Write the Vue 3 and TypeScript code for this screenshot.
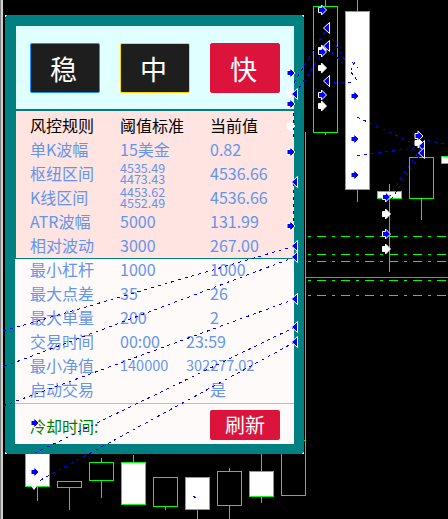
<script setup lang="ts">
interface Candle { x: number; y: number; w: number; h: number; fill: string; wick: [number, number] }
const candles: Candle[] = [
  { x: 313.5, y: 6.5, w: 24, h: 126, fill: '#000', wick: [0, 135] },
  { x: 345.5, y: 11.5, w: 24, h: 178, fill: '#fff', wick: [0, 202] },
  { x: 409.5, y: 157.5, w: 24, h: 41, fill: '#000', wick: [157, 220] },
  { x: 377.5, y: 191.5, w: 24, h: 7, fill: '#fff', wick: [184, 272] },
  { x: 441.5, y: 156.5, w: 24, h: 7, fill: '#fff', wick: [156, 164] },
  { x: 25.5, y: 440.5, w: 24, h: 46, fill: '#fff', wick: [440, 501] },
  { x: 57.5, y: 481.5, w: 24, h: 6, fill: '#000', wick: [481, 510] },
  { x: 89.5, y: 462.5, w: 24, h: 18, fill: '#000', wick: [458, 498] },
  { x: 121.5, y: 462.5, w: 24, h: 42, fill: '#fff', wick: [455, 462] },
  { x: 153.5, y: 477.5, w: 24, h: 29, fill: '#000', wick: [477, 510] },
  { x: 185.5, y: 477.5, w: 24, h: 32, fill: '#fff', wick: [477, 519] },
  { x: 217.5, y: 471.5, w: 24, h: 34, fill: '#000', wick: [468, 519] },
  { x: 249.5, y: 471.5, w: 24, h: 25, fill: '#fff', wick: [450, 503] },
  { x: 281.5, y: 440.5, w: 24, h: 55, fill: '#000', wick: [440, 440] },
]
const levels = [236.5, 254.5, 261.5, 280.5, 295.5]
const corners: [number, number][] = [[5, 15], [302, 15], [5, 452], [302, 452]]
const dotted: string[] = [
  'M 294 83 L 327 28',
  'M 329 33 L 346 62',
  'M 295 94 L 327 46',
  'M 327 47 L 346 67',
  'M 327 82 L 351 83',
  'M 352 62 L 358 68',
  'M 351 72 L 357 80',
  'M 355 62 L 351 70',
  'M 293.5 113 L 293.5 137',
  'M 293.5 183 L 293.5 226',
  'M 357 117 L 421 147',
  'M 357 156 L 421 147',
  'M 427 140 L 448 145',
  'M 421 148 L 389 197',
  'M 423 150 L 389 203',
  'M 295 246 L 0 332',
  'M 295 257 L 0 368',
  'M 295 299 L 0 407',
  'M 295 327 L 35 453',
  'M 295 342 L 37 482',
  'M 193 496 L 197 499',
]
const whiteRight: [number, number][] = [
  [322.5, 50], [322.5, 68], [322.5, 106], [291, 92], [291, 126], [386.5, 214], [386.5, 249], [419, 143],
]
const blueRight: [number, number][] = [
  [322.5, 10], [322.5, 52], [322.5, 95], [291, 73], [291, 104], [291, 152], [291, 226],
  [355, 96], [355, 139], [355, 175], [386.5, 197], [386.5, 234], [419, 136], [35, 472], [35, 423],
]
const blueLeft: [number, number][] = [
  [327, 28], [327, 46], [327, 81], [295, 94], [295, 182], [295, 246], [295, 257], [295, 299], [295, 327], [295, 342], [422, 146], [422, 153],
]

interface Row { name: string; limit: string | string[]; value: string; wide?: boolean; small?: boolean }
const riskRows: Row[] = [
  { name: '单K波幅', limit: '15美金', value: '0.82' },
  { name: '枢纽区间', limit: ['4535.49', '4473.43'], value: '4536.66' },
  { name: 'K线区间', limit: ['4453.62', '4552.49'], value: '4536.66' },
  { name: 'ATR波幅', limit: '5000', value: '131.99' },
  { name: '相对波动', limit: '3000', value: '267.00' },
]
const accountRows: Row[] = [
  { name: '最小杠杆', limit: '1000', value: '1000' },
  { name: '最大点差', limit: '35', value: '26' },
  { name: '最大单量', limit: '200', value: '2' },
  { name: '交易时间', limit: '00:00', value: '23:59', wide: true },
  { name: '最小净值', limit: '140000', value: '302277.02', wide: true, small: true },
  { name: '启动交易', limit: '', value: '是' },
]
</script>

<template>
  <div class="screen">
    <svg class="chart" width="448" height="519" viewBox="0 0 448 519">
      <rect x="0" y="0" width="1" height="519" fill="#808080" />
      <rect x="1" y="0" width="2" height="519" fill="#d0d0d0" />
      <line v-for="y in levels" :key="y" x1="308" x2="448" :y1="y" :y2="y" class="level" />
      <line x1="305" x2="448" y1="277.5" y2="277.5" class="grid" />
      <g v-for="c in candles" :key="c.x">
        <line :x1="c.x + 12" :x2="c.x + 12" :y1="c.wick[0]" :y2="c.wick[1]" class="wick" />
        <rect :x="c.x" :y="c.y" :width="c.w" :height="c.h" :fill="c.fill" class="body" />
      </g>
      <rect x="305" y="132" width="1" height="364" class="edge" />
      <rect v-for="p in corners" :key="p[0] + '-' + p[1]" :x="p[0]" :y="p[1]" width="2" height="2" fill="#fff" />
      <path d="M31 454H37L34 450Z M31 486H37L34 490Z" fill="#fff" />
    </svg>

    <section class="panel">
      <div class="modes">
        <button class="mode steady">稳</button>
        <button class="mode medium">中</button>
        <button class="mode fast">快</button>
      </div>
      <div class="table risk">
        <div class="row head">
          <span>风控规则</span><span>阈值标准</span><span>当前值</span>
        </div>
        <div v-for="r in riskRows" :key="r.name" class="row">
          <span>{{ r.name }}</span>
          <span v-if="Array.isArray(r.limit)" class="pair">
            <i>{{ r.limit[0] }}</i><i>{{ r.limit[1] }}</i>
          </span>
          <span v-else>{{ r.limit }}</span>
          <span>{{ r.value }}</span>
        </div>
      </div>
      <div class="table account">
        <div v-for="r in accountRows" :key="r.name" class="row" :class="{ small: r.small }">
          <span>{{ r.name }}</span>
          <span>{{ r.limit }}</span>
          <span :class="{ shifted: r.wide }">{{ r.value }}</span>
        </div>
      </div>
      <div class="footer">
        <span class="cooldown">冷却时间:</span>
        <button class="refresh">刷新</button>
      </div>
    </section>

    <svg class="overlay" width="448" height="519" viewBox="0 0 448 519">
      <path v-for="d in dotted" :key="d" :d="d" class="dots" />
      <path
        v-for="p in whiteRight"
        :key="'w' + p[0] + p[1]"
        :transform="`translate(${p[0]} ${p[1]})`"
        d="M-4 -2.5H-1V-5L4 0L-1 5V2.5H-4Z"
        fill="#fff"
        stroke="#fff"
      />
      <path
        v-for="p in blueRight"
        :key="'b' + p[0] + p[1]"
        :transform="`translate(${p[0]} ${p[1]})`"
        d="M-4 -2.5H-1V-5L4 0L-1 5V2.5H-4Z"
        fill="#0000ff"
        stroke="#fff"
      />
      <path
        v-for="p in blueLeft"
        :key="'l' + p[0] + p[1]"
        :transform="`translate(${p[0]} ${p[1]})`"
        d="M2.5 -5.5V5.5L-3.5 0Z"
        fill="#0000ff"
        stroke="#fff"
      />
    </svg>
  </div>
</template>

<style>
html, body { margin: 0; background: #000; }
</style>

<style scoped>
.screen {
  position: relative;
  width: 448px;
  height: 519px;
  overflow: hidden;
  background: #000;
  font-family: "Noto Sans CJK SC", "Open Sans", sans-serif;
}
.chart, .overlay { position: absolute; left: 0; top: 0; }
.overlay { pointer-events: none; }
.level { stroke: #00ff00; stroke-dasharray: 3 6 9 6; shape-rendering: crispEdges; }
.grid { stroke: #808890; shape-rendering: crispEdges; }
.wick { stroke: #00ff00; shape-rendering: crispEdges; }
.body { stroke: #00ff00; shape-rendering: crispEdges; }
.edge { fill: #00ff00; }
.dots { fill: none; stroke: #0000ff; stroke-dasharray: 3 4; shape-rendering: crispEdges; }
.panel {
  position: absolute;
  left: 5px;
  top: 15px;
  width: 278px;
  height: 418px;
  border: solid #008080;
  border-width: 11px 10px 10px 11px;
  border-radius: 4px;
  display: flex;
  flex-direction: column;
}
.modes {
  background: #e0ffff;
  height: 85px;
  padding: 17px 14px 0;
  box-sizing: border-box;
  display: flex;
  gap: 20px;
  border-bottom: 2px solid #008080;
}
.mode {
  width: 70px;
  height: 50px;
  font: 27px "Noto Sans CJK SC", sans-serif;
  color: #fff;
  padding: 0 3px 0 0;
  box-sizing: border-box;
  border-radius: 2px;
}
.steady { background: #1e1e1e; border: 1px solid #1e90ff; }
.medium { background: #1e1e1e; border: 1px solid #ffd700; }
.fast { background: #dc143c; border: 1px solid #dc143c; }
.table { padding-left: 14px; font-size: 16px; color: #6495ed; box-sizing: border-box; }
.risk {
  background: #ffe4e1;
  height: 148px;
  border-bottom: 1px solid #008080;
  padding-top: 2px;
}
.account {
  background: #fffafa;
  height: 144px;
  margin-left: -1px;
  padding-left: 15px;
}
.row {
  display: grid;
  grid-template-columns: 90px 90px 1fr;
  height: 24px;
  line-height: 24px;
  white-space: nowrap;
}
.account .row { line-height: 20px; }
.head { color: #000; }
.pair {
  display: flex;
  flex-direction: column;
  font-size: 12.5px;
  line-height: 11px;
  padding-top: 1px;
}
.pair i { font-style: normal; }
.small span:nth-child(2),
.small span:nth-child(3) { font-size: 14.5px; }
.shifted { margin-left: -24px; }
.footer {
  flex: 1;
  background: #fffafa;
  border-top: 1px solid #87ceeb;
  margin-left: -1px;
  display: flex;
  align-items: center;
  justify-content: space-between;
  padding: 0 14px 0 15px;
}
.cooldown { color: #008000; font-size: 16px; padding-top: 4px; }
.refresh {
  width: 70px;
  height: 30px;
  margin-top: 1px;
  background: #dc143c;
  color: #fff;
  border: 0;
  border-radius: 2px;
  padding: 0;
  font: 20px "Noto Sans CJK SC", sans-serif;
}
</style>
